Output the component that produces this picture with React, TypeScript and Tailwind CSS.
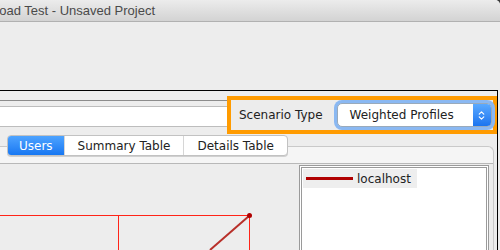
import { ChevronsUpDown } from "lucide-react"

const ui = { fontFamily: '"DejaVu Sans", "Liberation Sans", sans-serif' }

function TitleBar() {
  return (
    <div className="h-[22px] shrink-0 bg-gradient-to-b from-[#ececec] to-[#d3d3d3] border-b border-[#b1b1b1] flex items-center rounded-tr-[5px] overflow-hidden">
      <span
        className="ml-[-8px] text-[13px] text-[#4a4a4a] whitespace-nowrap leading-none"
        style={{ fontFamily: '"Liberation Sans", Arial, sans-serif' }}
      >
        Load Test - Unsaved Project
      </span>
    </div>
  )
}

function ScenarioPicker() {
  return (
    <div className="w-[270px] h-[38px] mt-[5px] border-[4px] border-[#ff9b00] bg-[#ececec] flex items-center pl-[8px] shrink-0">
      <span className="text-[12px] text-[#222] whitespace-nowrap" style={ui}>
        Scenario Type
      </span>
      <div className="ml-[14px] h-[24px] w-[155px] rounded-[5px] ring-[3px] ring-[#8ab8f2] bg-white border border-[#9ab] flex items-center overflow-hidden">
        <span className="flex-1 pl-[12px] text-[12px] text-[#222] whitespace-nowrap" style={ui}>
          Weighted Profiles
        </span>
        <div className="w-[18px] h-full bg-gradient-to-b from-[#5aa9ff] to-[#1a74ef] flex items-center justify-center">
          <ChevronsUpDown className="w-[11px] h-[13px] text-white" strokeWidth={2.5} />
        </div>
      </div>
    </div>
  )
}

function Tabs() {
  const tabs = ["Users", "Summary Table", "Details Table"]
  return (
    <div className="relative z-10 ml-[7px] flex h-[21px] w-fit shrink-0 rounded-[4px] border border-[#c2c2c2] bg-white shadow-[0_1px_0_#d0d0d0] overflow-hidden">
      {tabs.map((t, i) => (
        <div
          key={t}
          className={`flex items-center text-[12px] whitespace-nowrap ${
            i === 0
              ? "px-[11px] bg-gradient-to-b from-[#4da3ff] to-[#1677f2] text-white"
              : "px-[13px] text-[#222] border-l border-[#d6d6d6]"
          }`}
          style={ui}
        >
          {t}
        </div>
      ))}
    </div>
  )
}

function Chart() {
  return (
    <svg width="299" height="86" className="block shrink-0">
      <line x1="0" y1="51.5" x2="249.5" y2="51.5" stroke="#ff2418" strokeWidth="1" />
      <line x1="118.5" y1="51.5" x2="118.5" y2="86" stroke="#ff2418" strokeWidth="1" />
      <line x1="249.5" y1="51.5" x2="249.5" y2="86" stroke="#ff2418" strokeWidth="1" />
      <line x1="249" y1="52" x2="210" y2="86" stroke="#b8302a" strokeWidth="2" />
      <circle cx="249.5" cy="51.5" r="2.5" fill="#b00000" />
    </svg>
  )
}

function Legend() {
  return (
    <div className="mt-[1px] w-[190px] h-[100px] shrink-0 border-[3px] border-double border-[#9a9a9a] bg-white p-[1px]">
      <div className="w-[114px] h-[19px] bg-[#eeeeee] flex items-center gap-[4px] pl-[3px]">
        <div className="w-[47px] h-[3px] bg-[#b00000]" />
        <span className="text-[12px] text-[#222]" style={ui}>
          localhost
        </span>
      </div>
    </div>
  )
}

export default function App() {
  return (
    <div className="w-[500px] h-[250px] bg-[#3a3a3a] overflow-hidden">
      <div className="h-full bg-[#ededed] rounded-tr-[5px] flex flex-col">
        <TitleBar />
        <div className="h-[68px] shrink-0" />
        <div className="w-[498px] flex-1 min-h-0 border-t border-r border-black flex flex-col overflow-hidden">
          <div className="flex items-start h-[44px] shrink-0">
            <div className="flex-1 mt-[9px] border-t border-[#8c8c8c]">
              <div className="mt-[5px] h-[21px] bg-white border-y border-[#bdbdbd]" />
            </div>
            <ScenarioPicker />
          </div>
          <Tabs />
          <div className="-mt-[10px] mr-[3px] flex-1 border-t border-r border-[#c9c9c9] rounded-tr-[6px] flex flex-col">
            <div className="h-[17px] shrink-0 bg-[#f5f5f5] border-b border-[#b8b8b8] rounded-tr-[6px]" />
            <div className="flex flex-1 bg-[#ededed]">
              <Chart />
              <Legend />
            </div>
          </div>
        </div>
      </div>
    </div>
  )
}
